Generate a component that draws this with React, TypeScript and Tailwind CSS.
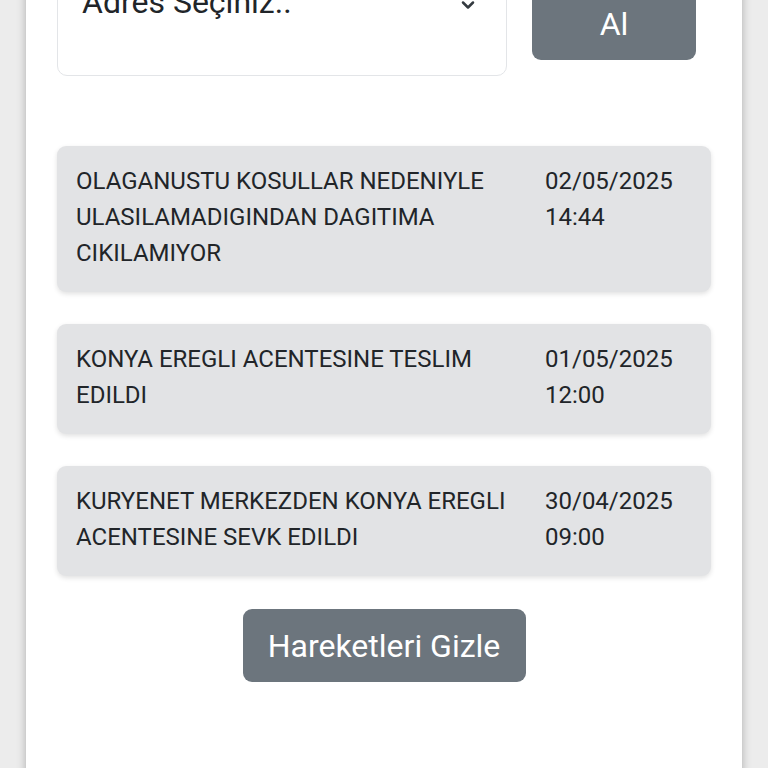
import { ChevronDown } from "lucide-react";

interface Hareket {
  aciklama: string;
  tarih: string;
  saat: string;
}

const hareketler: Hareket[] = [
  {
    aciklama: "OLAGANUSTU KOSULLAR NEDENIYLE ULASILAMADIGINDAN DAGITIMA CIKILAMIYOR",
    tarih: "02/05/2025",
    saat: "14:44",
  },
  {
    aciklama: "KONYA EREGLI ACENTESINE TESLIM EDILDI",
    tarih: "01/05/2025",
    saat: "12:00",
  },
  {
    aciklama: "KURYENET MERKEZDEN KONYA EREGLI ACENTESINE SEVK EDILDI",
    tarih: "30/04/2025",
    saat: "09:00",
  },
];

export default function App() {
  return (
    <div
      className="h-screen overflow-hidden bg-[#ececec] flex justify-center"
      style={{ fontFamily: "Roboto, 'Noto Sans', sans-serif" }}
    >
      <div className="w-[716px] h-[860px] -mt-[40px] bg-white rounded-[14px] shadow-[0_0_10px_rgba(0,0,0,0.28)] px-[31px] text-[#212529]">
        {/* Adres seçimi */}
        <div className="flex items-start gap-[25px]">
          <div className="w-[450px] h-[116px] border border-[#e3e5e8] rounded-[10px] pl-[24px] pr-[28px] pt-[17px] flex items-start justify-between">
            <span className="text-[32px] leading-[48px]">Adres Seçiniz..</span>
            <ChevronDown className="w-[20px] h-[20px] mt-[17px] text-[#343a40]" strokeWidth={3} />
          </div>
          <button className="mt-[27px] w-[164px] h-[73px] rounded-[9px] bg-[#6c757d] text-white text-[32px] leading-[48px]">
            Al
          </button>
        </div>

        {/* Hareketler */}
        <div className="mt-[70px] flex flex-col gap-[32px]">
          {hareketler.map((h) => (
            <div
              key={h.tarih}
              className="flex bg-[#e2e3e5] rounded-[9px] shadow-[0_2px_5px_rgba(0,0,0,0.12)] pl-[19px] pr-[19px] pt-[17px] pb-[21px] text-[24px] leading-[36px]"
            >
              <p className="flex-1 pr-[14px]">{h.aciklama}</p>
              <p className="w-[147px] shrink-0">
                {h.tarih}
                <br />
                {h.saat}
              </p>
            </div>
          ))}
        </div>

        <div className="flex justify-center mt-[33px]">
          <button className="w-[283px] h-[73px] rounded-[9px] bg-[#6c757d] text-white text-[32px] leading-[48px]">
            Hareketleri Gizle
          </button>
        </div>
      </div>
    </div>
  );
}
